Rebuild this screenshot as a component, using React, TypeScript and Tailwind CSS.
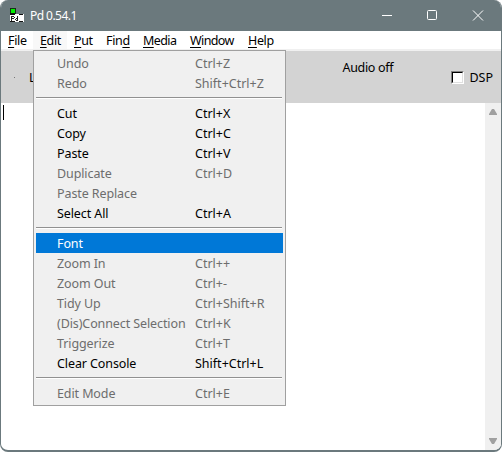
type Item = { label: string; keys?: string; on?: boolean; active?: boolean };

const groups: Item[][] = [
  [
    { label: "Undo", keys: "Ctrl+Z" },
    { label: "Redo", keys: "Shift+Ctrl+Z" },
  ],
  [
    { label: "Cut", keys: "Ctrl+X", on: true },
    { label: "Copy", keys: "Ctrl+C", on: true },
    { label: "Paste", keys: "Ctrl+V", on: true },
    { label: "Duplicate", keys: "Ctrl+D" },
    { label: "Paste Replace" },
    { label: "Select All", keys: "Ctrl+A", on: true },
  ],
  [
    { label: "Font", active: true },
    { label: "Zoom In", keys: "Ctrl++" },
    { label: "Zoom Out", keys: "Ctrl+-" },
    { label: "Tidy Up", keys: "Ctrl+Shift+R" },
    { label: "(Dis)Connect Selection", keys: "Ctrl+K" },
    { label: "Triggerize", keys: "Ctrl+T" },
    { label: "Clear Console", keys: "Shift+Ctrl+L", on: true },
  ],
  [{ label: "Edit Mode", keys: "Ctrl+E" }],
];

const bar = [
  { pre: "", key: "F", post: "ile", w: "w-[32px]" },
  { pre: "", key: "E", post: "dit", w: "w-[34px]" },
  { pre: "", key: "P", post: "ut", w: "w-[32px]" },
  { pre: "Fin", key: "d", post: "", w: "w-[37px]" },
  { pre: "", key: "M", post: "edia", w: "w-[47px] tracking-[-0.6px]" },
  { pre: "", key: "W", post: "indow", w: "w-[58px] tracking-[-0.6px]" },
  { pre: "", key: "H", post: "elp", w: "w-[39px]" },
];

function Menu() {
  return (
    <div className="absolute left-[32px] top-[50px] w-[253px] h-[356px] border border-[#a0a0a0] bg-[#f0f0f0] p-[2px]">
      {groups.map((g, i) => (
        <div key={i}>
          {i > 0 && (
            <div className="h-[10px] pt-1">
              <div className="mr-px h-[2px] border-t border-[#919191] bg-white" />
            </div>
          )}
          {g.map((it) => (
            <div
              key={it.label}
              className={`flex h-5 items-center pl-[21px] pt-[2px] leading-5 ${
                it.active ? "bg-[#0078d7] text-white" : it.on ? "text-black" : "text-[#6d6d6d]"
              }`}
            >
              <span className="w-[138px] whitespace-nowrap tracking-[-0.1px]">{it.label}</span>
              <span className="whitespace-nowrap">{it.keys}</span>
            </div>
          ))}
        </div>
      ))}
    </div>
  );
}

export default function App() {
  return (
    <div className="h-[452px] w-[502px] bg-white">
      <div className="relative flex h-[452px] w-[502px] flex-col overflow-hidden rounded-lg border-b-2 border-l border-r border-[#6b797d] bg-white font-['Noto_Sans',sans-serif] text-[12.5px] text-black">
        <div className="flex h-[31px] shrink-0 items-center bg-[#6b797d] text-white">
          <svg className="ml-[9px] h-4 w-4 shrink-0" viewBox="0 0 16 16" shapeRendering="crispEdges">
            <rect x="0" y="0" width="6" height="6" fill="#163016" />
            <rect x="1" y="1" width="4" height="4" fill="#00f000" />
            <rect x="0" y="6" width="14" height="8" fill="#fff" />
            <rect x="0" y="5" width="5" height="2" fill="#111" />
            <rect x="9" y="6" width="4" height="1" fill="#111" />
            <rect x="0" y="13" width="5" height="1" fill="#111" />
            <rect x="9" y="13" width="4" height="1" fill="#111" />
            <path d="M1.500 8v5M2 8.500h2M4.500 9v1M2 10.500h2M6 10.500h1M6 12.500h2M5.500 11v1M7.500 8v5" stroke="#222" fill="none" />
          </svg>
          <span className="ml-1 text-[12px] tracking-[-0.55px]">Pd 0.54.1</span>
          <svg className="ml-auto mr-[16px] mb-px h-[12px] w-[104px]" viewBox="0 0 104 12" fill="none" stroke="#fff">
            <path d="M1 6.500h10" />
            <rect x="46.500" y="1.500" width="9" height="9" rx="1" />
            <path d="M92 1.500l10 10M102 1.500l-10 10" />
          </svg>
        </div>
        <div className="flex h-5 shrink-0 border-b-2 border-[#f0f0f0] leading-5 tracking-[-0.35px]">
          {bar.map((m, i) => (
            <span key={i} className={`${m.w} pl-[7px] ${m.key === "E" ? "bg-[#f8f8f8]" : ""}`}>
              {m.pre}
              <span className="underline underline-offset-2">{m.key}</span>
              {m.post}
            </span>
          ))}
        </div>
        <div className="flex h-[52px] shrink-0 items-center bg-[#d3d3d3]">
          <span className="ml-[13px] h-px w-px bg-[#777]" />
          <span className="ml-[14px] mt-[2px]">Log:</span>
          <span className="mb-[17px] ml-auto w-[109px] tracking-[-0.3px]">Audio off</span>
          <div className="h-[13px] w-[13px] border border-b-white border-l-[#828282] border-r-white border-t-[#828282]">
            <div className="h-[11px] w-[11px] border border-b-[#e0e0e0] border-l-black border-r-[#e0e0e0] border-t-black bg-white" />
          </div>
          <span className="ml-[5px] mr-[8px] mt-[2px]">DSP</span>
        </div>
        <div className="flex min-h-0 flex-1">
          <div className="flex-1 pl-[2px] pt-[2px]">
            <div className="h-[15px] w-px bg-black" />
          </div>
          <div className="flex w-4 flex-col items-center justify-between bg-[#f0f0f0] py-[6px]">
            <svg className="h-[6px] w-2" viewBox="0 0 8 6"><path d="M0 6V5L3 0h2l3 5v1z" fill="#a0a0a0" /></svg>
            <svg className="h-[6px] w-2" viewBox="0 0 8 6"><path d="M0 0v1l3 5h2l3-5V0z" fill="#a0a0a0" /></svg>
          </div>
        </div>
        <Menu />
      </div>
    </div>
  );
}
